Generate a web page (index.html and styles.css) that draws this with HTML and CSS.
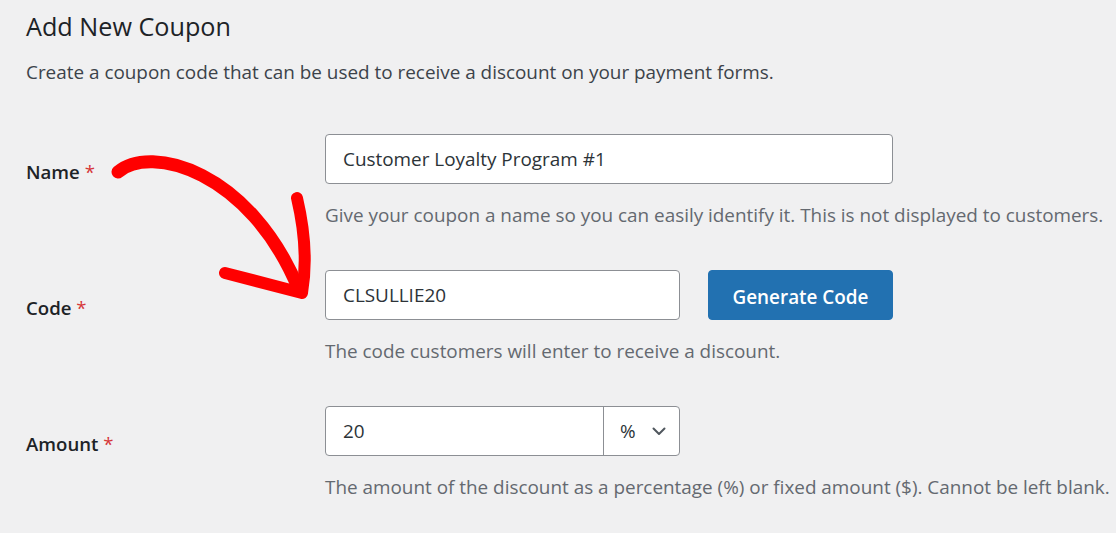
FILE: index.html
```html
<!DOCTYPE html>
<html>
<head>
<meta charset="utf-8">
<link rel="stylesheet" href="styles.css">
</head>
<body>
<div class="page">
  <h1 class="title">Add New Coupon</h1>
  <p class="intro">Create a coupon code that can be used to receive a discount on your payment forms.</p>

  <div class="form">
    <div class="row">
      <label class="label">Name <span class="req">*</span></label>
      <div class="field">
        <div class="control">
          <div class="input input-name">Customer Loyalty Program #1</div>
        </div>
        <p class="help">Give your coupon a name so you can easily identify it. This is not displayed to customers.</p>
      </div>
    </div>

    <div class="row">
      <label class="label">Code <span class="req">*</span></label>
      <div class="field">
        <div class="control">
          <div class="input input-code">CLSULLIE20</div>
          <button class="btn">Generate Code</button>
        </div>
        <p class="help">The code customers will enter to receive a discount.</p>
      </div>
    </div>

    <div class="row">
      <label class="label">Amount <span class="req">*</span></label>
      <div class="field">
        <div class="control">
          <div class="group">
            <div class="group-input">20</div>
            <div class="group-select">
              <span>%</span>
              <svg class="chev" width="14" height="9" viewBox="0 0 14 9"><path d="M1.5 1.5 L7 7 L12.5 1.5" fill="none" stroke="#50575e" stroke-width="2" stroke-linecap="round" stroke-linejoin="round"/></svg>
            </div>
          </div>
        </div>
        <p class="help">The amount of the discount as a percentage (%) or fixed amount ($). Cannot be left blank.</p>
      </div>
    </div>
  </div>

  <svg class="arrow" width="1116" height="533" viewBox="0 0 1116 533">
    <path d="M118 172 C150 144 250 170 299 290" fill="none" stroke="#ff0000" stroke-width="13" stroke-linecap="round"/>
    <path d="M297 198 C305 232 307 264 302 293 L225 273" fill="none" stroke="#ff0000" stroke-width="12" stroke-linecap="round" stroke-linejoin="round"/>
  </svg>
</div>
</body>
</html>
```

FILE: styles.css
```css
html, body {
  margin: 0;
  padding: 0;
  background: #f0f0f1;
}
body {
  font-family: "Open Sans", "Noto Sans", sans-serif;
  color: #1d2327;
  width: 1116px;
  height: 533px;
  overflow: hidden;
}
.page {
  position: relative;
  padding: 10px 0 0 26px;
}
.title {
  margin: 0;
  font-size: 25.2px;
  font-weight: 500;
  line-height: 32px;
  color: #1d2327;
}
.intro {
  margin: 17px 0 0;
  font-size: 18.9px;
  line-height: 26px;
  color: #3c434a;
}
.form {
  margin-top: 49px;
  display: flex;
  flex-direction: column;
  gap: 42px;
}
.row {
  display: grid;
  grid-template-columns: 299px 1fr;
  align-items: start;
}
.label {
  font-size: 18.6px;
  font-weight: 600;
  line-height: 26px;
  padding-top: 25px;
  color: #1d2327;
}
.req {
  color: #d63638;
  font-weight: 400;
}
.control {
  display: flex;
  gap: 28px;
  align-items: center;
}
.input {
  box-sizing: border-box;
  height: 50px;
  background: #fff;
  border: 1px solid #8c8f94;
  border-radius: 4px;
  padding: 0 17px;
  font-size: 18.9px;
  line-height: 48px;
  color: #2c3338;
}
.input-name { width: 568px; }
.input-code { width: 355px; }
.btn {
  box-sizing: border-box;
  width: 185px;
  height: 50px;
  background: #2271b1;
  border: 1px solid #2271b1;
  border-radius: 4px;
  color: #fff;
  font-family: inherit;
  font-size: 18.9px;
  font-weight: 600;
  padding: 3px 0 0;
}
.group {
  box-sizing: border-box;
  width: 355px;
  height: 50px;
  display: flex;
  background: #fff;
  border: 1px solid #8c8f94;
  border-radius: 4px;
}
.group-input {
  flex: 1;
  padding: 0 17px;
  font-size: 18.9px;
  line-height: 48px;
  color: #2c3338;
  border-right: 1px solid #8c8f94;
}
.group-select {
  width: 75px;
  display: flex;
  align-items: center;
  padding-left: 16px;
  box-sizing: border-box;
  font-size: 18.9px;
  color: #2c3338;
  gap: 16px;
}
.chev { display: block; margin-top: 1px; }
.help {
  margin: 18px 0 0;
  font-size: 18.9px;
  line-height: 26px;
  color: #646970;
}
.arrow {
  position: absolute;
  left: 0;
  top: 0;
  pointer-events: none;
}
```
